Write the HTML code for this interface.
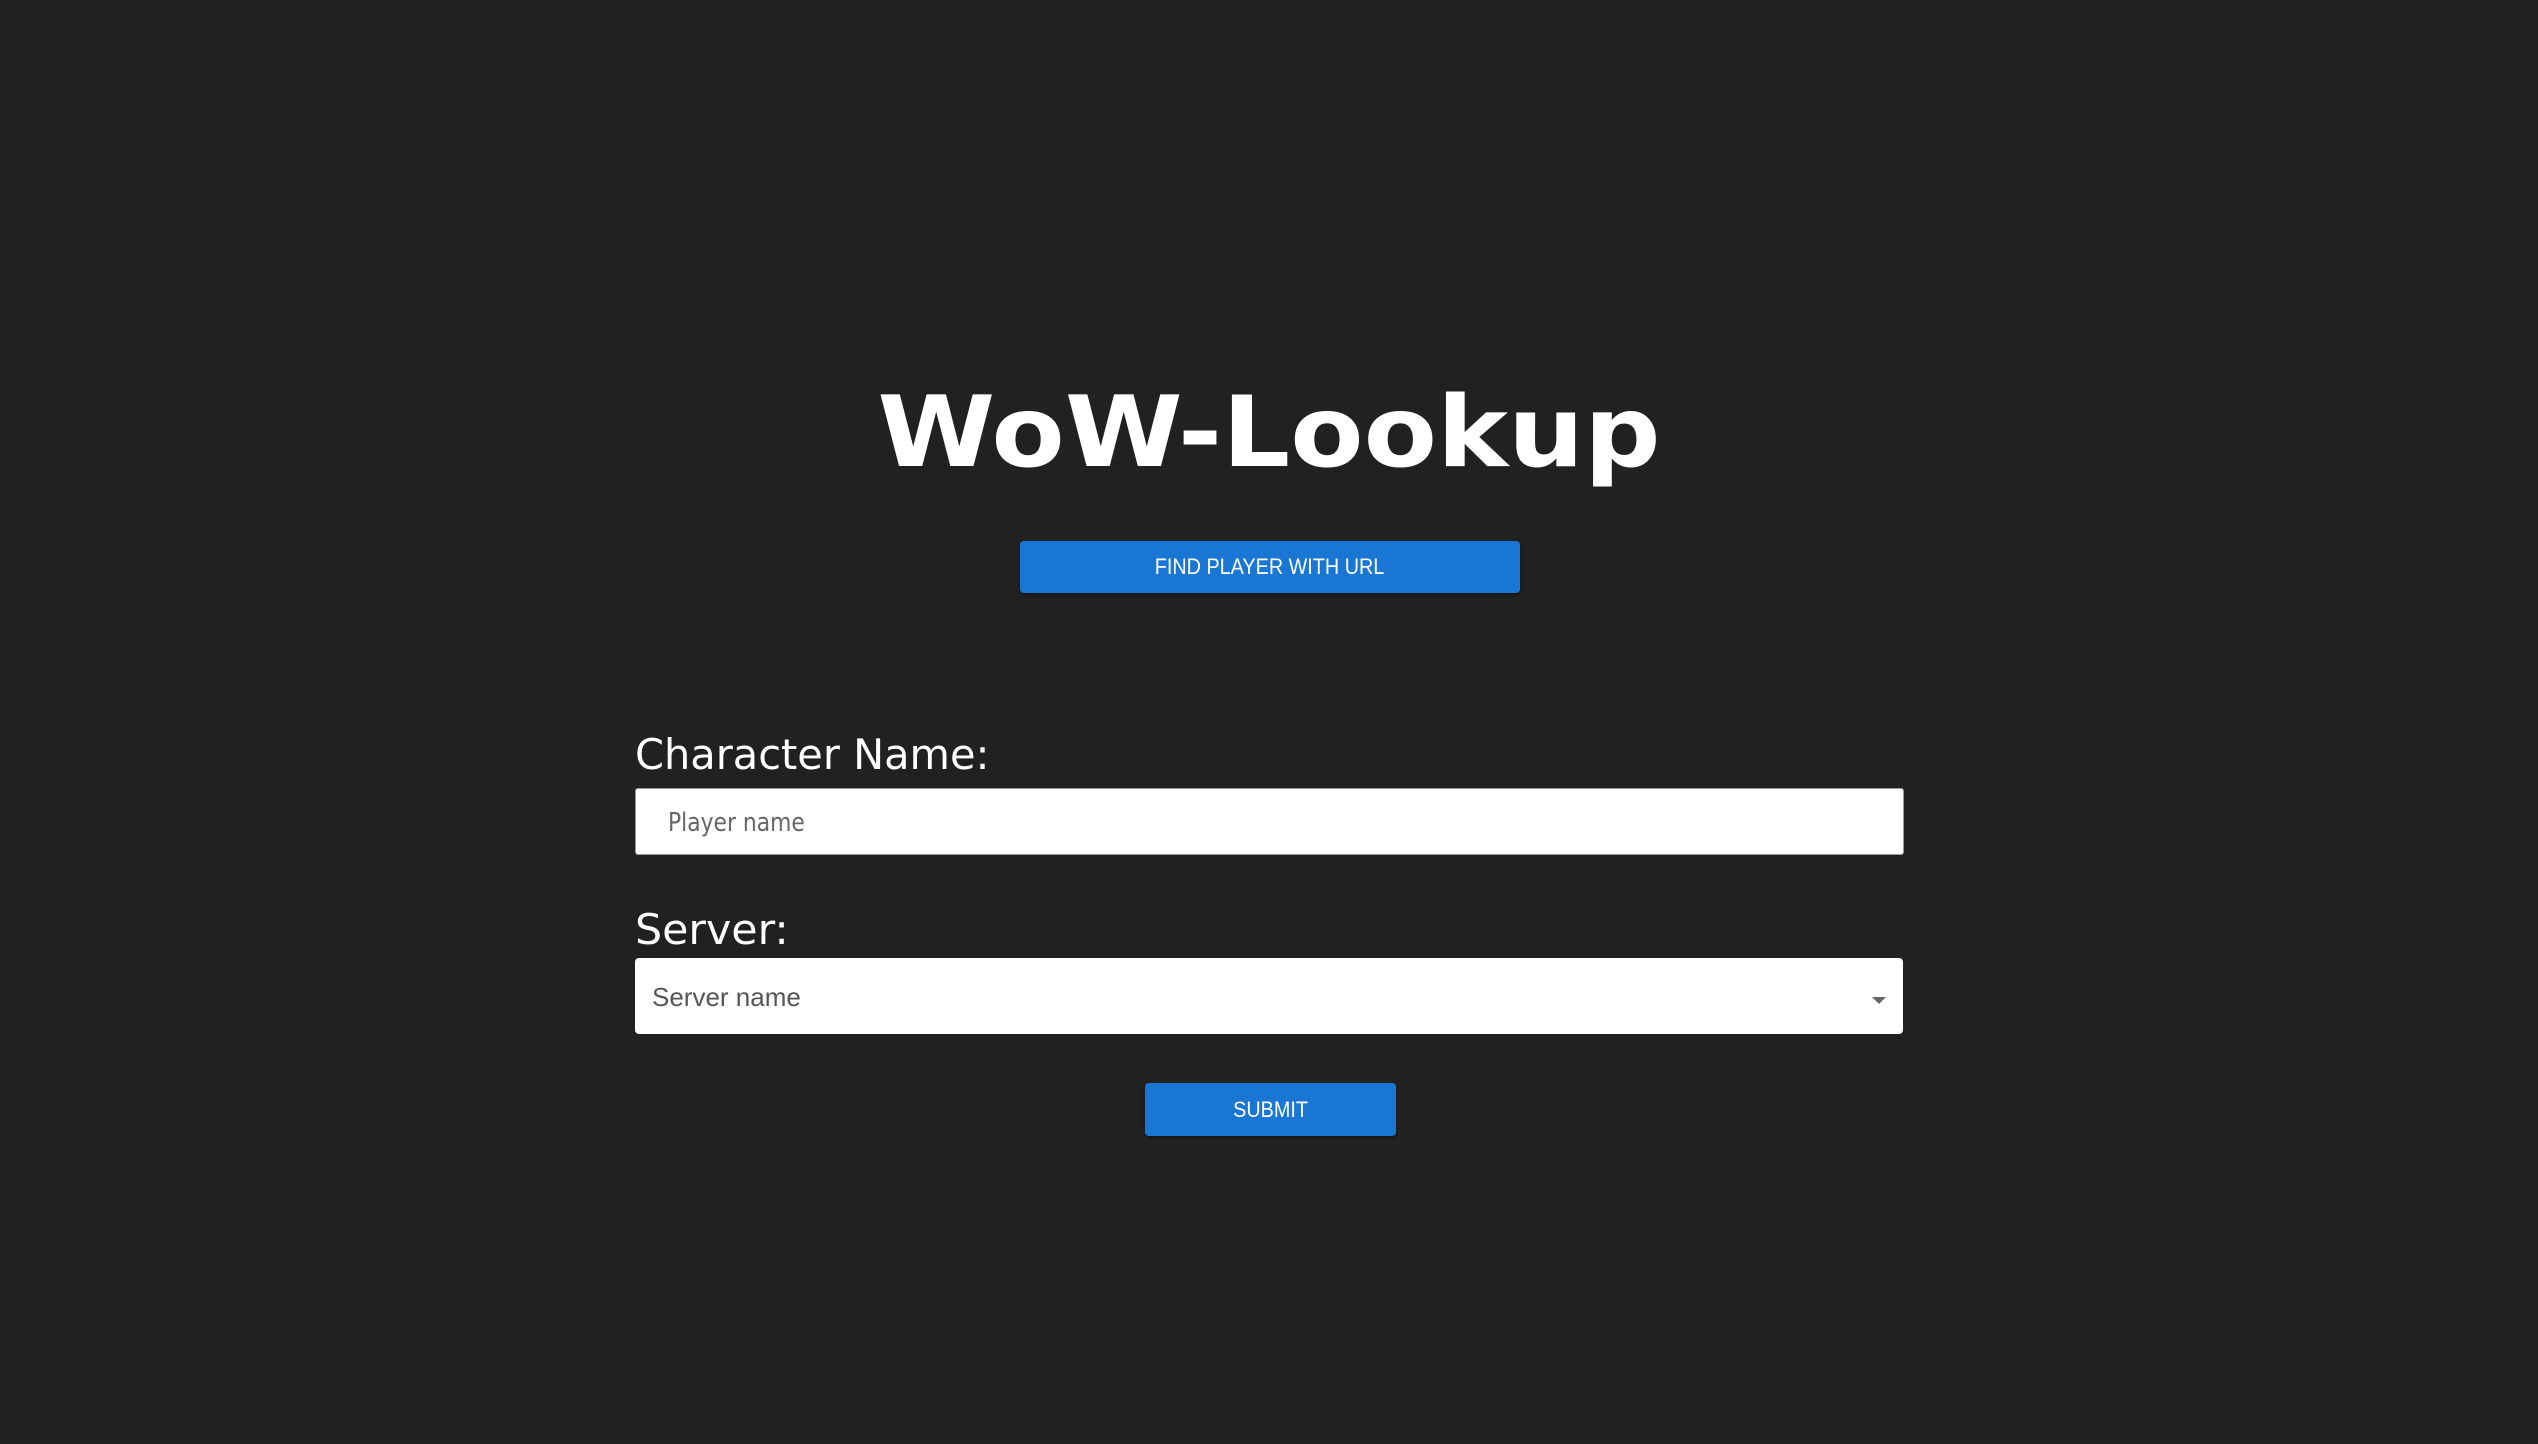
<!DOCTYPE html>
<html><head><meta charset="utf-8"><style>
html,body{margin:0;padding:0;width:2538px;height:1444px;background:#212121;overflow:hidden;position:relative}
.a{position:absolute}
h1{position:absolute;left:0;width:2538px;top:373px;margin:0;text-align:center;font:bold 98px "DejaVu Sans",sans-serif;color:#fff;line-height:120px;transform:scaleX(1.09)}
.btn{position:absolute;background:#1976d2;color:#fff;border-radius:4px;font:22px "Liberation Sans",sans-serif;text-align:center;box-shadow:0 3px 1px -2px rgba(0,0,0,.2),0 2px 2px rgba(0,0,0,.14),0 1px 5px rgba(0,0,0,.12)}
.btn span{display:inline-block;transform:scaleX(0.9)}
.lbl{position:absolute;left:635px;font:41.5px "DejaVu Sans",sans-serif;color:#fff;line-height:48px}
</style></head><body>
<h1>WoW-Lookup</h1>
<div class="btn" style="left:1020px;top:541px;width:500px;height:52px;line-height:52px"><span>FIND PLAYER WITH URL</span></div>
<div class="lbl" style="top:731px">Character Name:</div>
<div class="a" style="left:635px;top:788px;width:1267px;height:65px;background:#fff;border:1px solid #999;border-radius:3px"></div>
<div class="a" style="left:668px;top:805px;font:26px 'DejaVu Sans',sans-serif;color:#666;line-height:36px;transform:scaleX(0.84);transform-origin:left">Player name</div>
<div class="lbl" style="top:906px;transform:scaleX(1.03);transform-origin:left">Server:</div>
<div class="a" style="left:635px;top:958px;width:1268px;height:76px;background:#fff;border-radius:4px"></div>
<div class="a" style="left:652px;top:979px;font:26px 'Liberation Sans',sans-serif;color:#555;line-height:36px">Server name</div>
<div class="a" style="left:1872px;top:997px;width:0;height:0;border-left:7px solid transparent;border-right:7px solid transparent;border-top:7px solid #666"></div>
<div class="btn" style="left:1145px;top:1083px;width:251px;height:53px;line-height:53px"><span>SUBMIT</span></div>
</body></html>
